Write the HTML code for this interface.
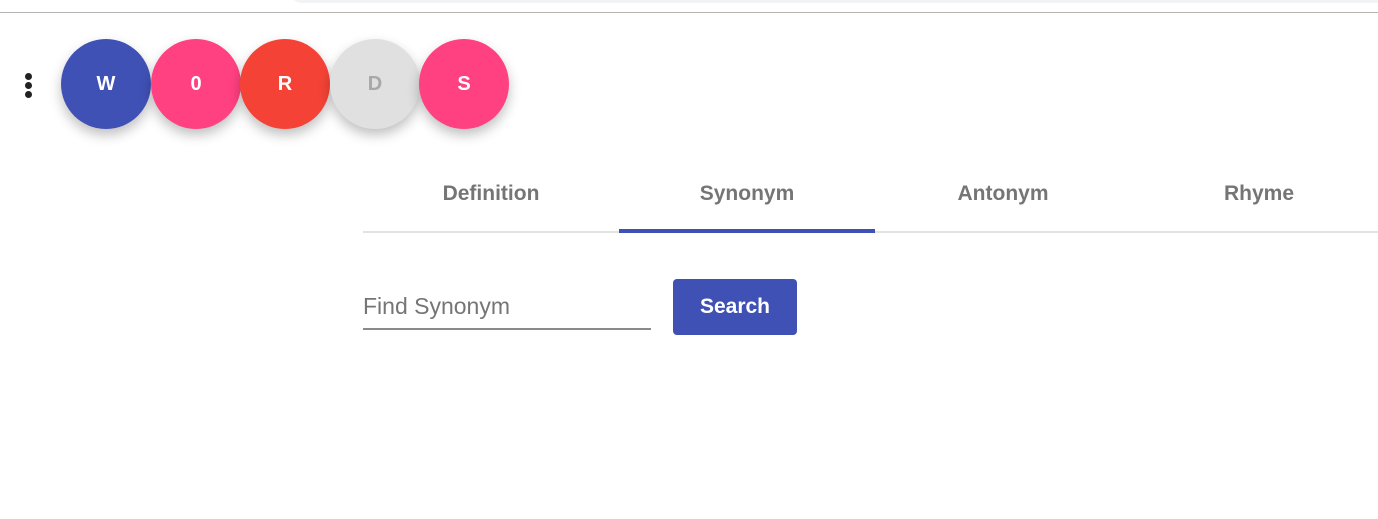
<!DOCTYPE html>
<html><head><style>
body{margin:0;width:1378px;height:519px;background:#fff;font-family:"Liberation Sans",Arial,sans-serif;position:relative;overflow:hidden}
.topbar{position:absolute;left:290px;top:-10px;width:1100px;height:13px;background:#f1f3f4;border-radius:0 0 0 12px}
.hr{position:absolute;left:0;top:12px;width:1378px;height:1px;background:#b5b5b5}
.dots{position:absolute;left:25px;top:73px}
.dots i{display:block;width:7px;height:7px;border-radius:50%;background:#222;margin-bottom:2px}
.c{position:absolute;top:39px;width:90px;height:90px;border-radius:50%;color:#fff;font-weight:bold;font-size:20px;display:flex;align-items:center;justify-content:center;box-shadow:0 6px 12px rgba(0,0,0,.25)}
.tab{position:absolute;top:182px;width:256px;text-align:center;font-size:21px;font-weight:bold;color:#757575}
.tl{position:absolute;left:363px;top:231px;width:1015px;height:2px;background:#e3e3e3}
.ind{position:absolute;left:619px;top:229px;width:256px;height:4px;background:#3f51b5}
.inp{position:absolute;left:363px;top:293px;font-size:23px;color:#757575}
.ul{position:absolute;left:363px;top:328px;width:288px;height:2px;background:#8a8a8a}
.btn{position:absolute;left:673px;top:279px;width:124px;height:56px;border-radius:4px;background:#3f51b5;color:#fff;font-weight:bold;font-size:21px;display:flex;align-items:center;justify-content:center}
</style></head><body>
<div class="topbar"></div><div class="hr"></div>
<div class="dots"><i></i><i></i><i></i></div>
<div class="c" style="left:61px;background:#3f51b5">W</div>
<div class="c" style="left:151px;background:#ff4081">0</div>
<div class="c" style="left:240px;background:#f44336">R</div>
<div class="c" style="left:330px;background:#e0e0e0;color:#a8a8a8">D</div>
<div class="c" style="left:419px;background:#ff4081">S</div>
<div class="tab" style="left:363px">Definition</div>
<div class="tab" style="left:619px">Synonym</div>
<div class="tab" style="left:875px">Antonym</div>
<div class="tab" style="left:1131px">Rhyme</div>
<div class="tl"></div><div class="ind"></div>
<div class="inp">Find Synonym</div><div class="ul"></div>
<div class="btn">Search</div>
</body></html>
